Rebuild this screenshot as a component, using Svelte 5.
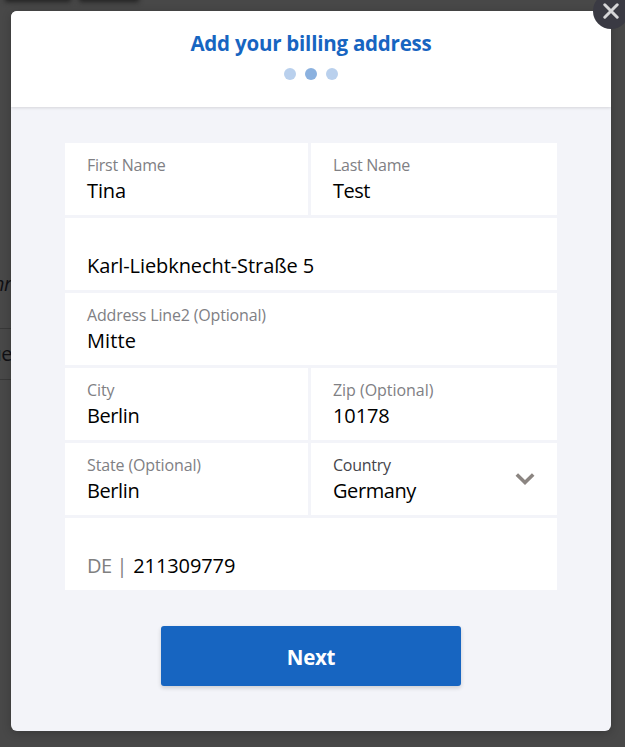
<script>
  // lt / vt: letter-spacing of the label and of the value, in px
  const fields = [
    { label: 'First Name', value: 'Tina', half: true, lt: -0.25, vt: -0.1 },
    { label: 'Last Name', value: 'Test', half: true, lt: -0.28, vt: -0.55 },
    { label: '', value: 'Karl-Liebknecht-Straße 5', lt: 0, vt: -0.08 },
    { label: 'Address Line2 (Optional)', value: 'Mitte', lt: -0.17, vt: 0.1 },
    { label: 'City', value: 'Berlin', half: true, lt: -0.1, vt: -0.4 },
    { label: 'Zip (Optional)', value: '10178', half: true, lt: -0.04, vt: -0.1 },
    { label: 'State (Optional)', value: 'Berlin', half: true, lt: -0.13, vt: -0.4 },
    { label: 'Country', value: 'Germany', half: true, select: true, lt: -0.25, vt: -0.42 },
    { label: '', prefix: 'DE |', value: '211309779', lt: 0, vt: -0.1 }
  ];
</script>

<div class="screen">
  <div class="tab first"></div>
  <div class="tab second"></div>
  <span class="behind italic">hr</span>
  <div class="behind-box"><span class="behind">ue</span></div>

  <main class="modal">
    <header>
      <h1>Add your billing address</h1>
      <div class="dots"><i></i><i class="active"></i><i></i></div>
    </header>
    <form onsubmit={(e) => e.preventDefault()}>
      <div class="grid">
        {#each fields as f}
          <div class="field" class:full={!f.half}>
            <span class="label" class:dark={f.select} style:letter-spacing="{f.lt}px">{f.label}</span>
            <span class="value" style:letter-spacing="{f.vt}px">
              {#if f.prefix}<span class="prefix">{f.prefix}</span>{/if}{f.value}
            </span>
            {#if f.select}
              <svg class="chevron" width="20" height="12" viewBox="0 0 20 12">
                <path d="M1.8 1.5 L10 9.5 L18.2 1.5" fill="none" stroke="#8b8581" stroke-width="3.6" />
              </svg>
            {/if}
          </div>
        {/each}
      </div>
      <button type="submit">Next</button>
    </form>
  </main>

  <div class="close">
    <svg width="16" height="16" viewBox="0 0 16 16">
      <path d="M1.8 1.8 L14.2 14.2 M14.2 1.8 L1.8 14.2" stroke="#d6d6d8" stroke-width="3" stroke-linecap="round" />
    </svg>
  </div>
</div>

<style>
  .screen {
    position: relative;
    box-sizing: border-box;
    width: 625px;
    height: 747px;
    padding: 11px 14px 16px 11px;
    overflow: hidden;
    background: #484848;
    font-family: 'Segoe UI', 'Open Sans', 'Noto Sans', sans-serif;
  }
  .tab {
    position: absolute;
    top: -10px;
    height: 10px;
    box-shadow: 0 1px 5px 1px #222;
    background: #333;
  }
  .first { left: 6px; width: 64px; }
  .second { left: 80px; width: 58px; }
  .behind {
    position: absolute;
    right: 0;
    font-size: 20px;
    line-height: 28px;
    letter-spacing: -0.5px;
    color: #101014;
  }
  .behind.italic {
    right: auto;
    left: -7px;
    top: 270px;
    font-style: italic;
  }
  .behind-box {
    position: absolute;
    left: -20px;
    top: 328px;
    box-sizing: border-box;
    width: 33px;
    height: 52px;
    border: 1px solid #383838;
    padding-top: 11px;
  }
  .modal {
    position: relative;
    display: flex;
    flex-direction: column;
    height: 720px;
    border-radius: 6px;
    overflow: hidden;
    background: #f3f4f9;
    box-shadow: 0 2px 10px rgba(0, 0, 0, 0.22);
  }
  header {
    box-sizing: border-box;
    height: 96px;
    flex: none;
    padding-top: 17px;
    display: flex;
    flex-direction: column;
    align-items: center;
    background: #fff;
    box-shadow: 0 1px 3px rgba(0, 0, 0, 0.13);
  }
  h1 {
    margin: 0;
    font-size: 20.5px;
    line-height: 30px;
    font-weight: 700;
    letter-spacing: -0.22px;
    color: #1765c1;
    white-space: nowrap;
  }
  .dots {
    display: flex;
    gap: 9px;
    margin-top: 10px;
  }
  .dots i {
    width: 12px;
    height: 12px;
    border-radius: 50%;
    background: #b9d0ed;
  }
  .dots .active { background: #8bb1df; }
  form {
    display: flex;
    flex-direction: column;
    align-items: center;
    padding-top: 36px;
  }
  .grid {
    display: grid;
    grid-template-columns: 243px 246px;
    gap: 3px;
  }
  .field {
    position: relative;
    box-sizing: border-box;
    height: 72px;
    padding: 10px 22px 0;
    background: #fff;
    display: flex;
    flex-direction: column;
  }
  .full { grid-column: span 2; }
  .label {
    height: 24px;
    font-size: 16px;
    line-height: 24px;
    color: #808084;
    white-space: nowrap;
  }
  .label.dark { color: #45454b; }
  .value {
    font-size: 20px;
    line-height: 28px;
    color: #000;
    white-space: nowrap;
  }
  .prefix {
    margin-right: 6px;
    letter-spacing: -0.4px;
    color: #808080;
  }
  .chevron {
    position: absolute;
    right: 22px;
    top: 30px;
  }
  button {
    width: 300px;
    height: 60px;
    margin-top: 36px;
    padding: 1px 0 0;
    border: 0;
    border-radius: 3px;
    background: #1765c1;
    box-shadow: 0 2px 4px rgba(0, 0, 0, 0.16);
    color: #fff;
    font: 700 20.5px/30px 'Segoe UI', 'Open Sans', 'Noto Sans', sans-serif;
    letter-spacing: -0.3px;
  }
  .close {
    position: absolute;
    left: 593px;
    top: -7px;
    width: 36px;
    height: 36px;
    border-radius: 50%;
    background: #3a3a43;
  }
  .close svg {
    position: absolute;
    left: 10px;
    top: 10px;
  }
</style>
